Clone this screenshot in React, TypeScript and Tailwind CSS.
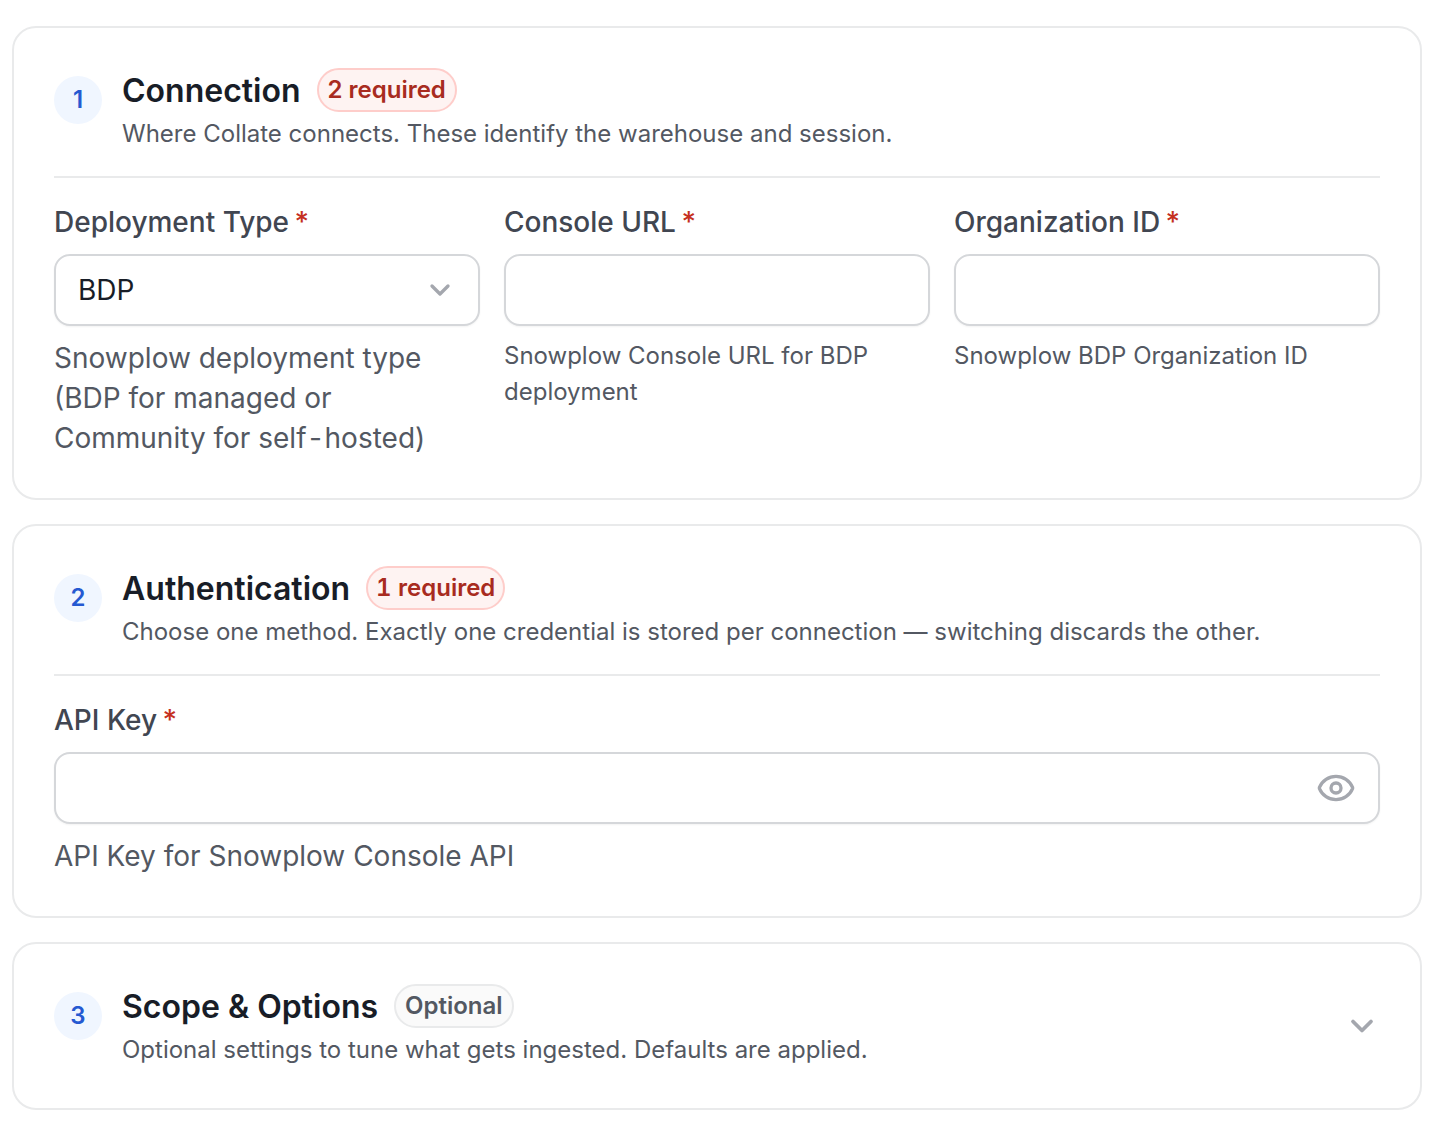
import { ChevronDown, Eye } from "lucide-react";

type BadgeKind = "required" | "optional";

function Badge({ kind, children, className = "px-[9px]" }: { kind: BadgeKind; children: string; className?: string }) {
  const colors =
    kind === "required"
      ? "border-[#fecdca] bg-[#fef3f2] text-[#a82b20]"
      : "border-[#e9eaeb] bg-[#fafafa] text-[#535862]";
  return (
    <span className={`flex h-11 items-center rounded-full border-2 text-[24px] font-semibold ${colors} ${className}`}>
      {children}
    </span>
  );
}

function SectionHeader({
  step,
  title,
  badge,
  description,
}: {
  step: number;
  title: string;
  badge: React.ReactNode;
  description: string;
}) {
  return (
    <div className="flex items-start gap-5">
      <div className="mt-2 flex h-12 w-12 shrink-0 items-center justify-center rounded-full bg-[#f0f6ff] pb-[1px] text-[24px] font-semibold text-[#2559d1]">
        {step}
      </div>
      <div>
        <div className="flex h-11 items-center gap-4">
          <h2 className="mt-[2px] text-[32px] font-semibold text-[#181d27]">{title}</h2>
          {badge}
        </div>
        <p className="mt-1 text-[24px] leading-9 text-[#535862]">{description}</p>
      </div>
    </div>
  );
}

function Label({ children }: { children: string }) {
  return (
    <label className="mb-3 block text-[28px] leading-10 font-medium text-[#414651]">
      {children} <span className="ml-[-2px] text-[#c5301f]">*</span>
    </label>
  );
}

const inputBox =
  "flex h-[72px] w-full items-center rounded-2xl border-2 border-[#d5d7da] bg-white px-[22px] text-[28px] text-[#181d27] shadow-xs";

export default function App() {
  return (
    <div className="flex flex-col gap-6 bg-white pt-[26px] pr-[14px] pb-4 pl-3 font-['Inter',sans-serif] antialiased">
      <section className="rounded-3xl border-2 border-[#e9eaeb] bg-white p-10">
        <div className="border-b-2 border-[#e9eaeb] pb-6">
          <SectionHeader
            step={1}
            title="Connection"
            badge={<Badge kind="required">2 required</Badge>}
            description="Where Collate connects. These identify the warehouse and session."
          />
        </div>
        <div className="mt-6 grid grid-cols-3 gap-6">
          <div>
            <Label>Deployment Type</Label>
            <div className={`${inputBox} justify-between`}>
              <span>BDP</span>
              <ChevronDown className="h-8 w-8 text-[#a4a7ae]" strokeWidth={2.5} />
            </div>
            <p className="mt-3 text-[28px] leading-10 text-[#535862]">
              Snowplow deployment type (BDP for managed or Community for self<span className="inline-block px-1">‑</span>hosted)
            </p>
          </div>
          <div>
            <Label>Console URL</Label>
            <div className={inputBox} />
            <p className="mt-3 text-[24px] leading-9 text-[#535862]">Snowplow Console URL for BDP deployment</p>
          </div>
          <div>
            <Label>Organization ID</Label>
            <div className={inputBox} />
            <p className="mt-3 text-[24px] leading-9 text-[#535862]">Snowplow BDP Organization ID</p>
          </div>
        </div>
      </section>

      <section className="rounded-3xl border-2 border-[#e9eaeb] bg-white p-10">
        <div className="border-b-2 border-[#e9eaeb] pb-6">
          <SectionHeader
            step={2}
            title="Authentication"
            badge={<Badge kind="required" className="px-2 tabular-nums">1 required</Badge>}
            description="Choose one method. Exactly one credential is stored per connection — switching discards the other."
          />
        </div>
        <div className="mt-6">
          <Label>API Key</Label>
          <div className={`${inputBox} justify-end`}>
            <Eye className="h-10 w-10 text-[#a4a7ae]" strokeWidth={2} />
          </div>
          <p className="mt-3 text-[28px] leading-10 text-[#535862]">API Key for Snowplow Console API</p>
        </div>
      </section>

      <section className="flex items-center justify-between rounded-3xl border-2 border-[#e9eaeb] bg-white p-10">
        <SectionHeader
          step={3}
          title="Scope & Options"
          badge={<Badge kind="optional">Optional</Badge>}
          description="Optional settings to tune what gets ingested. Defaults are applied."
        />
        <ChevronDown className="h-9 w-9 text-[#a4a7ae]" strokeWidth={2.5} />
      </section>
    </div>
  );
}
